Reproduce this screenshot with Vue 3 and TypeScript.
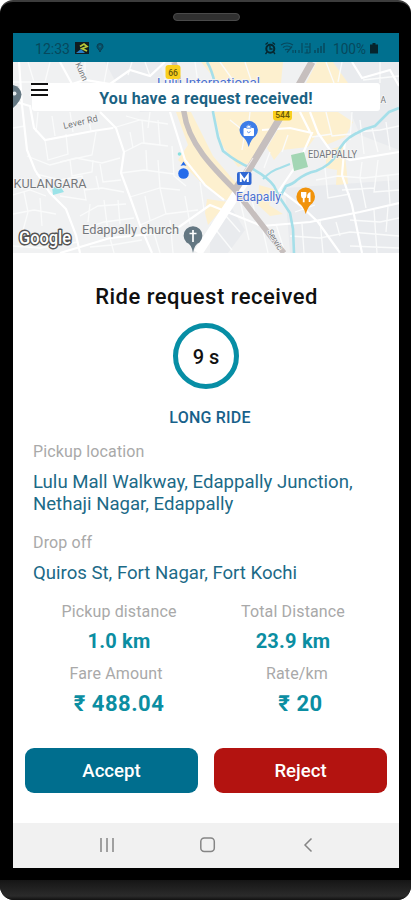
<script setup lang="ts">
interface Stat {
  label: string
  value: string
  kind: string
}

const stats: Stat[] = [
  { label: 'Pickup distance', value: '1.0 km', kind: 'pickup' },
  { label: 'Total Distance', value: '23.9 km', kind: 'total' },
  { label: 'Fare Amount', value: '₹ 488.04', kind: 'fare' },
  { label: 'Rate/km', value: '₹ 20', kind: 'rate' },
]

const mainStreets: string[] = [
  'M19 62L22 105L27 150L35 170L50 193L66 209L76 235L80 253',
  'M13 101L30 106L34 128L45 140L93 131L113 128',
  'M100 112L116 128L124 152L121 173L130 197L140 225L152 253',
  'M60 62L72 84L85 80L110 84L130 70L150 76L165 62',
  'M60 253L110 238L172 232L210 205L262 226L310 222L360 212L399 203',
  'M170 112L185 160L205 185L224 200',
  'M310 112L318 133L330 150L350 160L399 152',
  'M352 62L362 78L390 70L399 86',
  'M280 190L300 205L318 222L340 253',
  'M345 140L342 175L352 205L362 253',
  'M262 130L290 128L312 133L300 160L276 195',
  'M300 112L310 132',
]

const lanes: string[] = [
  'M13 82H45L50 62M28 62L34 82L30 96M85 62V80M108 62L104 83M132 62L128 75M145 62L150 76M195 62L198 83M220 62L235 83M245 62L252 83',
  'M38 112L36 132M52 116L55 136M70 112L73 132M88 116L91 131M13 128L25 126M45 140L48 160L68 154L66 134M60 162L92 155L96 132',
  'M27 156L50 165L76 158L102 163L120 158M70 160L72 176L92 172L93 160M36 174L60 180L82 176L86 200L60 196M100 164L103 182L121 180',
  'M13 195L30 190L46 196M13 214L34 210L56 214M24 192L28 212L22 234M40 198L42 226M80 216L98 206L126 204M82 230L104 222L134 218',
  'M90 204L88 222M104 200L108 232M118 200L120 224M130 197L160 188L180 190M140 225L166 214L198 210M145 196L150 220M160 188L166 214',
  'M124 152L142 143L168 146M130 132L133 148M142 120L144 143L160 145L158 120M113 128L140 120L168 124M150 112L148 128M126 116L140 120',
  'M121 173L144 170L174 174M146 150L147 170M158 160L160 188M172 146L174 176L186 186M84 190L102 188L124 192M96 176L99 190',
  'M90 247L112 245L142 240M110 238L114 253M154 233L160 253M170 220L173 253M13 246L40 248L78 242M185 196L190 224M200 182L204 210',
  'M250 112L248 130M230 120L245 132L242 150M270 152L264 168M288 135L282 152M312 137L332 134M326 112L332 136L350 134M352 112L350 140',
  'M252 200L258 226M240 200L249 240M226 216L240 232M216 230L232 250M262 226L268 253M276 224L284 250M302 224L304 253M320 220L323 253',
  'M316 180L338 176L364 178L399 174M325 168L328 198L350 194M362 162L360 178L366 208M378 160L374 192L399 190M388 176L390 204M342 190L374 188',
  'M290 236L320 238L350 232L399 236M336 222L340 236M350 220L380 222L399 218M374 210L377 253M388 207L386 232M350 246L399 248M295 212L315 205',
  'M360 120L364 154M372 128L378 152M386 122L390 150M356 132L380 130L399 126M326 62L334 83M342 62L338 82M380 62V83M363 80L399 76',
]
</script>

<template>
  <main class="phone">
    <div class="speaker-row"><span class="speaker"></span></div>

    <section class="screen">
      <svg class="status" viewBox="13 33 386 29" role="img" aria-label="Status bar">
        <g class="status-text">
          <text x="35" y="53.500" textLength="35" lengthAdjust="spacingAndGlyphs">12:33</text>
          <text x="333" y="53.500" textLength="33" lengthAdjust="spacingAndGlyphs">100%</text>
        </g>
        <rect x="75" y="42" width="14" height="12" fill="#101c20" />
        <path d="M76 53L81 49L85 53Z" fill="#287fc4" />
        <path d="M80 46.500L84 44L87 46.500L82 48.500L87 51" fill="none" stroke="#b7c83a" stroke-width="1.800" />
        <path d="M100 43.500a3 3 0 0 1 3 3c0 2-2.300 3-3 5.500c-.7-2.500-3-3.500-3-5.500a3 3 0 0 1 3-3Z" fill="#0a5068" stroke="#083e52" />
        <circle cx="100" cy="46.500" r="1" fill="#007290" />
        <g fill="none" stroke="#06272f">
          <circle cx="270.300" cy="48.700" r="4" stroke-width="2" />
          <path d="M270 46v3h2.500M265.500 44.500l2.500-2M275 44.500l-2.500-2M267 52l-1.500 2M273.500 52l1.500 2" stroke-width="1.300" />
        </g>
        <g fill="none" stroke="#07485d" stroke-width="1.200">
          <path d="M281 45q6-4 12 0M283 47.500q4-3 8 0M285 50q2-1.500 4 0M287 52.500l5-6M293 50v3M295.500 50v3" />
          <path d="M299 53v-3M302 53v-10M304.500 47h5M305 44h3M307 49v4M310 43v10M304.500 53h5" />
          <path d="M315 53v-3M318 53v-5M321 53v-7M324 53v-10" stroke-width="1.500" />
        </g>
        <path d="M372.500 43h3v1.500h2.500v9h-8v-9h2.500Z" fill="#06242d" />
      </svg>

      <div class="map-wrap">
        <svg class="map" viewBox="13 62 386 191" role="img" aria-label="Map">
          <rect x="13" y="62" width="386" height="191" fill="#f0f1f2" />
          <g fill="#e9ebee">
            <path d="M105 62H160L172 110L140 112L120 90Z" />
            <path d="M330 62H399V150L360 135Z" />
            <path d="M285 188L399 180V253H290Z" />
            <path d="M210 225L230 205L245 230L228 253H210Z" />
          </g>
          <g fill="#fdf0cf">
            <path d="M201 62H283L281 83H218ZM214 112H284L257 160L238 167L222 145Z" />
            <path d="M176 112L191 112L213 156L242 190L229 202L204 185L178 160L188 145Z" />
            <path d="M207 199L228 202L208 225L205 213Z" />
            <path d="M288 112H318L321 129L308 147L282 150L274 160L267 148Z" />
            <path d="M317 62H333L348 83H306ZM318 112H338L353 122L345 137L326 145L315 130Z" />
            <path d="M326 151L344 145L348 184L336 185L337 170L326 168Z" />
            <path d="M259 185L277 190L269 205L283 214L270 216L258 205Z" />
          </g>

          <g class="lanes"><path v-for="d in lanes" :key="d" :d="d" /></g>
          <g class="streets"><path v-for="d in mainStreets" :key="d" :d="d" /></g>

          <g fill="none" stroke="#a5dfe9" stroke-width="2.600" stroke-linejoin="round">
            <path d="M207 62Q212 70 215 84L213 112L218 137L223 151Q238 163 251 168Q268 177 274 186L280 198L290 213L293 229L294 253" />
            <path d="M263 179Q272 170 280 168L290 164" stroke-width="2" />
            <path d="M281 195L286 186Q293 184 297 180Q306 173 316 171Q331 165 337 154Q343 140 355 134L365 129L375 126L389 112L399 108" />
          </g>
          <path d="M52 187L60 186L64 192L53 195Z" fill="#9be3e8" />
          <circle cx="179.500" cy="154" r="1.800" fill="#87e0df" />
          <path d="M291 155L304 152L308 167L294 171Z" fill="#a3d6b4" />

          <path d="M245 181Q225 211 198 253" fill="none" stroke="#fff" stroke-width="9" />
          <g fill="none" stroke="#c6bfbe">
            <path d="M174 62L180 86L184 112C188 143 213 168 235 190L269 234L284 253" stroke-width="5.500" />
            <path d="M312 62L283 113L251 166L235 190" stroke-width="7" />
          </g>
          <path d="M253 158L244 172" stroke="#eee9e8" stroke-width="1.200" />

          <g class="place">
            <text x="13.500" y="187.500" font-size="12.500" textLength="73" lengthAdjust="spacingAndGlyphs">KULANGARA</text>
            <text x="308" y="157.500" font-size="10.500" textLength="49" lengthAdjust="spacingAndGlyphs">EDAPPALLY</text>
            <text x="82" y="234" font-size="13" textLength="97" lengthAdjust="spacingAndGlyphs">Edappally church</text>
            <text x="64" y="129" font-size="9" textLength="35" transform="rotate(-13 64 129)">Lever Rd</text>
            <text x="75" y="64" font-size="8.500" transform="rotate(66 75 64)">Kunn</text>
            <text x="267" y="231.500" font-size="8.500" textLength="22" lengthAdjust="spacingAndGlyphs" transform="rotate(60 267 231.500)">Servic</text>
            <text x="380.500" y="102.500" font-size="8.500">A</text>
          </g>
          <g class="place-blue">
            <text x="157" y="86.500" font-size="12" textLength="103" lengthAdjust="spacingAndGlyphs">Lulu International</text>
            <text x="236" y="200.500" font-size="12.500" textLength="45" lengthAdjust="spacingAndGlyphs">Edapally</text>
          </g>

          <rect x="165.500" y="65" width="15" height="14" rx="3" fill="#f9cf1d" />
          <rect x="273" y="108" width="19" height="12.500" rx="3" fill="#f9cf1d" />
          <g class="shield">
            <text x="173" y="75.500">66</text>
            <text x="282.500" y="118">544</text>
          </g>

          <g>
            <path d="M248.700 147Q246.500 139 242 136.300A9.200 9.200 0 1 1 255.400 136.300Q251 139 248.700 147Z" fill="#3d7de8" />
            <path d="M244 128.500h9.500v7H244ZM246.500 128.500v-1a2.200 2.200 0 0 1 4.400 0v1" fill="#fff" stroke="#fff" />
            <path d="M246.500 128.200v-.7a2.200 2.200 0 0 1 4.400 0v.7ZM247 131.500q1.700 2.500 3.500 0" fill="none" stroke="#3d7de8" stroke-width=".8" />
            <path d="M305.700 214Q303.500 206 299 203.200A9.300 9.300 0 1 1 312.400 203.200Q308 206 305.700 214Z" fill="#f1930b" />
            <path d="M301 192h5.400v3.500q0 2.500-1.800 2.700v4h-1.800v-4q-1.800-.2-1.800-2.700ZM310.500 192v10h-1.800v-4h-1.500q-.6-5 3.300-6Z" fill="#fff" />
            <path d="M193 253Q191.500 244 186.500 242.500A9.400 9.400 0 1 1 199.500 242.500Q194.500 244 193 253Z" fill="#647782" />
            <path d="M193 230v12M189.500 233.500h7" fill="none" stroke="#fff" stroke-width="1.700" />
            <path d="M13 85Q21 87 21.500 94.500Q21 101 13 108Z" fill="#647782" />
            <circle cx="14.500" cy="93.500" r="2" fill="#e5e9eb" />
          </g>
          <rect x="237" y="172" width="14.500" height="13" rx="2" fill="#2f67d3" />
          <path d="M240.800 182v-6.800l3.500 4.800l3.500-4.800v6.800" fill="none" stroke="#fff" stroke-width="2" />
          <circle cx="183.500" cy="173.500" r="5.300" fill="#246bea" />
          <path d="M180.500 166L183.500 161.500L186.500 166Q183.500 164.500 180.500 166Z" fill="#246bea" />
          <text class="google" x="19" y="243.500" textLength="52" lengthAdjust="spacingAndGlyphs">Google</text>
        </svg>

        <div class="banner">You have a request received!</div>
        <button class="menu" aria-label="Menu"><i></i><i></i><i></i></button>
      </div>

      <section class="request">
        <h1>Ride request received</h1>
        <div class="timer">9 s</div>
        <div class="ride-type">LONG RIDE</div>
        <div class="trip">
          <div class="label">Pickup location</div>
          <p class="address">Lulu Mall Walkway, Edappally Junction,<br />Nethaji Nagar, Edappally</p>
          <div class="label">Drop off</div>
          <p class="address">Quiros St, Fort Nagar, Fort Kochi</p>
        </div>
        <dl class="stats">
          <div v-for="s in stats" :key="s.kind" :class="['stat', s.kind]">
            <dt>{{ s.label }}</dt>
            <dd>{{ s.value }}</dd>
          </div>
        </dl>
        <div class="actions">
          <button class="accept">Accept</button>
          <button class="reject">Reject</button>
        </div>
      </section>

      <nav class="nav">
        <svg viewBox="0 0 386 45" fill="none" stroke="#858585" stroke-width="1.500">
          <path d="M88 15v14M94 15v14M100 15v14" />
          <rect x="187.800" y="15" width="13.500" height="13.500" rx="3.500" />
          <path d="M298.500 15.500L292 22L298.500 28.500" />
        </svg>
      </nav>
    </section>
    <div class="chin"></div>
  </main>
</template>

<style>
body {
  margin: 0;
  background: #fff;
}
</style>

<style scoped>
.phone {
  box-sizing: border-box;
  width: 411px;
  height: 900px;
  display: flex;
  flex-direction: column;
  overflow: hidden;
  border-top: 2px solid #3c3c3c;
  border-radius: 13px 13px 14px 14px;
  background: #000;
  font-family: Roboto, "Liberation Sans", sans-serif;
}
.speaker-row {
  height: 31px;
  display: flex;
  justify-content: center;
  align-items: flex-start;
}
.speaker {
  box-sizing: border-box;
  width: 67px;
  height: 8px;
  margin: 11px 0 0 1px;
  border: 1px solid #4a4a4a;
  border-radius: 4px;
  background: #303030;
}
.screen {
  width: 386px;
  height: 835px;
  margin-left: 13px;
  display: flex;
  flex-direction: column;
  background: #fff;
}
.status {
  display: block;
  width: 386px;
  height: 29px;
  background: #00708f;
}
.status-text {
  font-size: 14px;
  fill: #07485c;
}
.map-wrap {
  position: relative;
  height: 191px;
}
.map {
  display: block;
  width: 386px;
  height: 191px;
}
.lanes {
  fill: none;
  stroke: #fafbfb;
  stroke-width: 1.3;
}
.streets {
  fill: none;
  stroke: #fff;
  stroke-width: 2.2;
}
.place {
  fill: #74777b;
  stroke: #f6f6f6;
  stroke-width: 1.5px;
  paint-order: stroke;
}
.place-blue {
  fill: #4a70d0;
  stroke: #f6f6f6;
  stroke-width: 1.5px;
  paint-order: stroke;
}
.shield {
  font-size: 8.5px;
  font-weight: 500;
  fill: #68570b;
  text-anchor: middle;
}
.google {
  font-size: 18px;
  font-weight: 500;
  fill: #fff;
  stroke: #555;
  stroke-width: 3px;
  stroke-linejoin: round;
  paint-order: stroke;
}
.banner {
  position: absolute;
  top: 21px;
  left: 19px;
  width: 348px;
  height: 28px;
  border-radius: 3px;
  background: #fff;
  color: #1a6283;
  font-size: 16px;
  font-weight: 700;
  letter-spacing: 0.27px;
  line-height: 31px;
  text-align: center;
}
.menu {
  position: absolute;
  top: 21px;
  left: 18px;
  width: 17px;
  height: 13px;
  padding: 0;
  border: 0;
  background: none;
  display: flex;
  flex-direction: column;
  justify-content: space-between;
}
.menu i {
  width: 17px;
  height: 2px;
  background: #111;
}
.request {
  height: 570px;
  display: flex;
  flex-direction: column;
  align-items: center;
}
h1 {
  margin: 30px 0 12px 1px;
  color: #101010;
  font-size: 22px;
  font-weight: 500;
  letter-spacing: 0.5px;
  line-height: 28px;
}
.timer {
  box-sizing: border-box;
  width: 66px;
  height: 66px;
  border: 5px solid #078ea5;
  border-radius: 50%;
  color: #111;
  font-size: 20px;
  font-weight: 500;
  line-height: 58px;
  text-align: center;
}
.ride-type {
  margin: 18px 0 0 8px;
  color: #17618a;
  font-size: 16px;
  font-weight: 500;
  letter-spacing: 0.2px;
  line-height: 22px;
}
.trip {
  width: 347px;
  height: 166px;
  margin: 12px 0 0 1px;
}
.label,
dt {
  color: #a9a9a9;
  font-size: 16px;
  letter-spacing: 0.14px;
  line-height: 22px;
}
.address {
  margin: 8px 0 17px;
  color: #1c6a87;
  font-size: 18.6px;
  line-height: 22px;
  white-space: nowrap;
}
.stats {
  width: 348px;
  margin: -6px 0 0;
  display: grid;
  grid-template-columns: 174px 174px;
  grid-template-rows: 62px 62px;
}
.stat {
  text-align: center;
}
dd {
  margin: 3px 0 0;
  color: #0b8ea2;
  font-size: 20px;
  font-weight: 700;
  letter-spacing: 0.2px;
  line-height: 30px;
}
.fare dd,
.rate dd {
  margin-top: 4px;
  font-size: 22px;
  letter-spacing: 0.5px;
}
.fare dt {
  margin-left: -6px;
}
.rate dt {
  margin-left: 8px;
}
.rate dd {
  margin-left: 15px;
}
.actions {
  width: 362px;
  height: 45px;
  margin-top: auto;
  margin-bottom: 30px;
  display: grid;
  grid-template-columns: 173px 173px;
  gap: 16px;
}
.actions button {
  padding: 1px 0 0;
  border: 0;
  border-radius: 9px;
  color: #fff;
  font: 500 18.6px/30px Roboto, sans-serif;
}
.accept {
  background: #006e8e;
}
.reject {
  background: #b31310;
}
.nav {
  height: 45px;
  background: #f1f1f1;
}
.nav svg {
  display: block;
  width: 386px;
  height: 45px;
}
.chin {
  height: 20px;
  margin-top: 12px;
  background: linear-gradient(#151515, #2b2b2b 80%, #111);
}
</style>
